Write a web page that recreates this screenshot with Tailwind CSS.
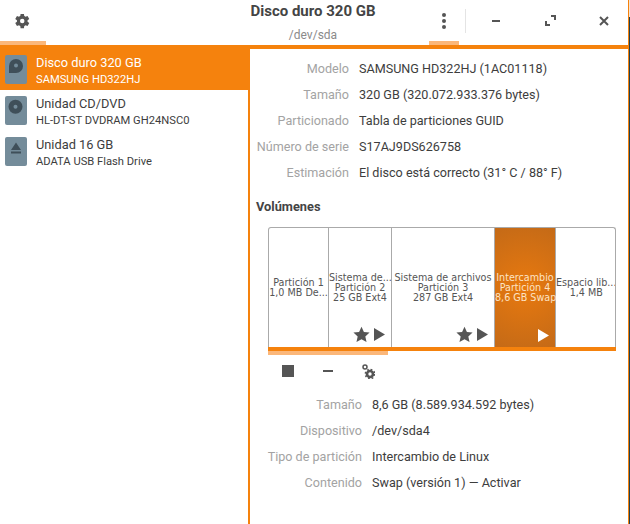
<!DOCTYPE html>
<html lang="es">
<head>
  <meta charset="UTF-8" />
  <title>Discos</title>
  <script src="https://cdn.jsdelivr.net/npm/@tailwindcss/browser@4"></script>
</head>
<body class="bg-white font-['Roboto',sans-serif] text-[#3d3d3d]">
<div class="w-[630px] h-[524px] overflow-hidden flex flex-col relative">

  <!-- borde derecho de la ventana -->
  <div class="absolute left-[628px] top-0 w-px h-full bg-[#f5820d]"></div>
  <div class="absolute left-[629px] top-0 w-px h-[17px] bg-[#f3e3d3]"></div>
  <div class="absolute left-[629px] top-[17px] bottom-0 w-px bg-[#24414f]"></div>

  <!-- barra de titulo -->
  <div class="h-[45px] flex shrink-0 relative">
    <div class="w-[46px] flex justify-center pt-[12px] pr-[2px]">
      <svg class="w-[18px] h-[18px]" viewBox="0 0 24 24" fill="#555"><path d="M19.400 13a7.500 7.500 0 0 0 0-2l2.300-1.800-2.300-3.900-2.700 1.100a7.600 7.600 0 0 0-1.700-1L14.600 2.500h-4.500l-.4 2.900a7.600 7.600 0 0 0-1.700 1L5.300 5.300 3 9.200 5.300 11a7.500 7.500 0 0 0 0 2L3 14.800l2.300 3.900 2.700-1.100a7.600 7.600 0 0 0 1.700 1l.4 2.900h4.500l.4-2.900a7.600 7.600 0 0 0 1.700-1l2.700 1.100 2.300-3.900zM12.300 15a3 3 0 1 1 0-6 3 3 0 0 1 0 6z"/></svg>
    </div>
    <div class="absolute left-0 bottom-0 w-[46px] h-[4px] bg-[#fbb77a]"></div>
    <div class="absolute left-[200px] w-[226px] top-0 text-center">
      <div class="text-[15px] leading-[16px] font-bold mt-[3px] text-[#444]">Disco duro 320 GB</div>
      <div class="text-[12px] leading-[14px] mt-[9px] text-[#8a8a8a]">/dev/sda</div>
    </div>
    <div class="absolute left-[429px] bottom-0 w-[30px] h-[4px] bg-[#fbb77a]"></div>
    <div class="absolute left-[442px] top-[13px] flex flex-col gap-[2px]">
      <span class="w-[4px] h-[4px] rounded-full bg-[#555]"></span>
      <span class="w-[4px] h-[4px] rounded-full bg-[#555]"></span>
      <span class="w-[4px] h-[4px] rounded-full bg-[#555]"></span>
    </div>
    <div class="absolute left-[465px] top-[9px] w-px h-[24px] bg-[#e4e4e4]"></div>
    <div class="absolute left-[492px] top-[20px] w-[8px] h-[2px] bg-[#555]"></div>
    <svg class="absolute left-[545px] top-[15px] w-[11px] h-[11px]" viewBox="0 0 11 11" fill="none" stroke="#555" stroke-width="2"><path d="M6 1h4v4M5 10H1V6"/></svg>
    <svg class="absolute left-[599px] top-[16px] w-[10px] h-[10px]" viewBox="0 0 10 10" fill="none" stroke="#555" stroke-width="2"><path d="M1 1l8 8M9 1l-8 8"/></svg>
  </div>

  <div class="h-[4px] bg-[#f5820d] shrink-0"></div>

  <div class="flex flex-1 min-h-0">
    <!-- lista de discos -->
    <div class="w-[248px] shrink-0">
      <div class="h-[41px] bg-[#f5820d] text-white flex pl-[5px]">
        <svg class="w-[22px] h-[29px] mt-[6px]" viewBox="0 0 22 29"><rect width="22" height="29" rx="2" fill="#748c9a"/><path d="M4 11a7 7 0 1 1 7 7H4z" fill="#3f4f59"/><circle cx="11" cy="10.500" r="2" fill="#748c9a"/></svg>
        <div class="ml-[9px] mt-[4px]">
          <div class="text-[12.800px] leading-[20px]">Disco duro 320 GB</div>
          <div class="text-[11.200px] leading-[14px]">SAMSUNG HD322HJ</div>
        </div>
      </div>
      <div class="h-[41px] flex pl-[5px]">
        <svg class="w-[22px] h-[29px] mt-[6px]" viewBox="0 0 22 29"><rect width="22" height="29" rx="2" fill="#748c9a"/><circle cx="10.500" cy="10.700" r="7" fill="#3f4f59"/><circle cx="10.500" cy="10.700" r="2" fill="#748c9a"/></svg>
        <div class="ml-[9px] mt-[4px]">
          <div class="text-[12.800px] leading-[20px]">Unidad CD/DVD</div>
          <div class="text-[11.200px] leading-[14px]">HL-DT-ST DVDRAM GH24NSC0</div>
        </div>
      </div>
      <div class="h-[41px] flex pl-[5px]">
        <svg class="w-[22px] h-[29px] mt-[6px]" viewBox="0 0 22 29"><rect width="22" height="29" rx="2" fill="#748c9a"/><path d="M11 5.500l5 7.500H6zM6 14.500h10v2H6z" fill="#3f4f59"/></svg>
        <div class="ml-[9px] mt-[4px]">
          <div class="text-[12.800px] leading-[20px]">Unidad 16 GB</div>
          <div class="text-[11.200px] leading-[14px]">ADATA USB Flash Drive</div>
        </div>
      </div>
    </div>

    <!-- detalle -->
    <div class="flex-1 border-l-[2px] border-[#f5820d] min-w-0">
      <div class="grid grid-cols-[94px_1fr] gap-x-[10px] gap-y-[6px] text-[12.600px] leading-[20px] mt-[10px] pl-[5px]">
        <div class="text-right text-[#a3a3a3]">Modelo</div><div>SAMSUNG HD322HJ (1AC01118)</div>
        <div class="text-right text-[#a3a3a3]">Tamaño</div><div>320 GB (320.072.933.376 bytes)</div>
        <div class="text-right text-[#a3a3a3]">Particionado</div><div>Tabla de particiones GUID</div>
        <div class="text-right text-[#a3a3a3] whitespace-nowrap">Número de serie</div><div>S17AJ9DS626758</div>
        <div class="text-right text-[#a3a3a3]">Estimación</div><div>El disco está correcto (31° C / 88° F)</div>
      </div>
      <div class="text-[12.800px] leading-[16px] font-bold mt-[16px] ml-[6px] text-[#444]">Volúmenes</div>

      <!-- barra de particiones -->
      <div class="ml-[18px] mt-[12px] w-[348px]">
        <div class="h-[120px] flex border border-b-0 border-[#aaa] rounded-t-[3px] font-['DejaVu_Sans',sans-serif] text-[9.600px] leading-[10px] text-[#555] text-center overflow-hidden">
          <div class="w-[60px] shrink-0 border-r border-[#aaa] flex flex-col justify-center"><div>Partición 1</div><div>1,0 MB De...</div></div>
          <div class="w-[63px] shrink-0 border-r border-[#aaa] relative flex flex-col justify-center whitespace-nowrap"><div>Sistema de...</div><div>Partición 2</div><div>25 GB Ext4</div>
            <div class="absolute right-[6px] bottom-[4px] flex items-center gap-[4px]">
              <svg class="w-[17px] h-[17px]" viewBox="0 0 24 24" fill="#555"><path d="M12 1l3.400 7.400 8 .9-6 5.400 1.700 8L12 18.700 4.900 22.700l1.700-8-6-5.400 8-.9z"/></svg>
              <svg class="w-[11px] h-[13px]" viewBox="0 0 11 13" fill="#555"><path d="M0 0l11 6.500-11 6.500z"/></svg>
            </div>
          </div>
          <div class="w-[103px] shrink-0 border-r border-[#aaa] relative flex flex-col justify-center whitespace-nowrap"><div>Sistema de archivos</div><div>Partición 3</div><div>287 GB Ext4</div>
            <div class="absolute right-[6px] bottom-[4px] flex items-center gap-[4px]">
              <svg class="w-[17px] h-[17px]" viewBox="0 0 24 24" fill="#555"><path d="M12 1l3.400 7.400 8 .9-6 5.400 1.700 8L12 18.700 4.900 22.700l1.700-8-6-5.400 8-.9z"/></svg>
              <svg class="w-[11px] h-[13px]" viewBox="0 0 11 13" fill="#555"><path d="M0 0l11 6.500-11 6.500z"/></svg>
            </div>
          </div>
          <div class="w-[61px] shrink-0 border-r border-[#aaa] relative flex flex-col justify-center whitespace-nowrap text-[#fde3c4] bg-[radial-gradient(circle,#e8790f,#c46a17)]"><div>Intercambio</div><div>Partición 4</div><div>8,6 GB Swap</div>
            <svg class="absolute right-[6px] bottom-[5px] w-[11px] h-[13px]" viewBox="0 0 11 13" fill="#fff"><path d="M0 0l11 6.500-11 6.500z"/></svg>
          </div>
          <div class="flex-1 flex flex-col justify-center whitespace-nowrap"><div>Espacio lib...</div><div>1,4 MB</div></div>
        </div>
        <div class="h-[4px] bg-[#f5820d]"></div>
        <div class="h-[4px] w-[120px] bg-[#fbb77a]"></div>
        <div class="flex items-center h-[22px] mt-[5px] pl-[14px]">
          <div class="w-[12px] h-[12px] bg-[#555]"></div>
          <div class="w-[10px] h-[2px] bg-[#555] ml-[29px]"></div>
          <svg class="w-[13px] h-[15px] ml-[29px]" viewBox="0 0 13 15"><circle cx="3" cy="3" r="2" fill="none" stroke="#555" stroke-width="1.500"/><circle cx="8" cy="10" r="3" fill="none" stroke="#555" stroke-width="2.600"/><circle cx="8" cy="10" r="4.700" fill="none" stroke="#555" stroke-width="1.400" stroke-dasharray="1.800 1.900"/></svg>
        </div>
      </div>

      <div class="grid grid-cols-[112px_1fr] gap-x-[10px] gap-y-[6px] text-[12.600px] leading-[20px] mt-[13px]">
        <div class="text-right text-[#a3a3a3]">Tamaño</div><div>8,6 GB (8.589.934.592 bytes)</div>
        <div class="text-right text-[#a3a3a3]">Dispositivo</div><div>/dev/sda4</div>
        <div class="text-right text-[#a3a3a3] whitespace-nowrap">Tipo de partición</div><div>Intercambio de Linux</div>
        <div class="text-right text-[#a3a3a3]">Contenido</div><div>Swap (versión 1) — Activar</div>
      </div>
    </div>
  </div>
</div>
</body>
</html>
